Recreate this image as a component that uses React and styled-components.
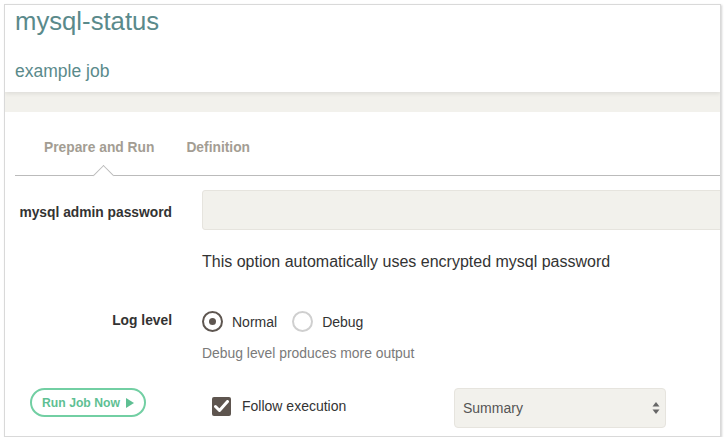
import React from "react";
import styled, { createGlobalStyle } from "styled-components";

const Global = createGlobalStyle`
  html, body { margin: 0; padding: 0; background: #fff; }
  body { font-family: "Liberation Sans", Arial, Helvetica, sans-serif; color: #333; }
  * { box-sizing: border-box; }
`;

const Page = styled.div`
  padding: 4px 0 0 4px;
`;

const Frame = styled.div`
  width: 717px;
  height: 433px;
  border: 1px solid #d9d9d9;
  box-shadow: 1px 1px 2px rgba(0, 0, 0, 0.18);
  overflow: hidden;
  background: #fff;
`;

const Header = styled.header`
  height: 87px;
  padding: 1px 0 0 10px;
  background: #fff;
  position: relative;
  z-index: 1;
  box-shadow: 0 2px 4px rgba(0, 0, 0, 0.08);
`;

const Title = styled.h1`
  margin: 0;
  font-weight: normal;
  font-size: 25.7px;
  line-height: 30px;
  color: #5a8a8b;
`;

const Subtitle = styled.div`
  margin-top: 25px;
  font-size: 17.5px;
  line-height: 20px;
  color: #5a8a8b;
`;

const Band = styled.div`
  height: 20px;
  background: #f2f1ec;
`;

const Content = styled.main`
  padding-left: 10px;
`;

const TabBar = styled.nav`
  display: flex;
  padding: 26px 0 17px 13px;
  border-bottom: 1px solid #bbbbbb;
`;

const Tab = styled.div`
  position: relative;
  padding: 0 16px;
  font-size: 13.8px;
  line-height: 20px;
  font-weight: bold;
  color: #a39d93;
  ${(p) =>
    p.$active &&
    `
    &::after {
      content: "";
      position: absolute;
      left: 68px;
      bottom: -25px;
      width: 14px;
      height: 14px;
      background: #fff;
      border-top: 1px solid #bbbbbb;
      border-left: 1px solid #bbbbbb;
      transform: rotate(45deg);
    }
  `}
`;

const FormRow = styled.div`
  display: grid;
  grid-template-columns: 157px 1fr;
  column-gap: 30px;
  margin-top: ${(p) => p.$mt || 0}px;
`;

const Label = styled.label`
  text-align: right;
  font-size: 13.8px;
  line-height: 20px;
  font-weight: bold;
  color: #333;
  white-space: nowrap;
  margin-top: ${(p) => p.$mt || 0}px;
`;

const Field = styled.div`
  min-width: 0;
`;

const TextInput = styled.input`
  display: block;
  width: 560px;
  height: 40px;
  border: 1px solid #e6e4de;
  border-radius: 3px;
  background: #f2f1ec;
  outline: none;
`;

const HelpLarge = styled.p`
  margin: 22px 0 0;
  font-size: 16px;
  line-height: 20px;
  color: #333;
`;

const RadioGroup = styled.div`
  display: flex;
  align-items: center;
  height: 21px;
`;

const RadioItem = styled.label`
  display: flex;
  align-items: center;
  margin-right: 15px;
  font-size: 14px;
  line-height: 20px;
  color: #333;
`;

const RadioCircle = styled.span`
  width: 21px;
  height: 21px;
  border-radius: 50%;
  border: 2px solid ${(p) => (p.$checked ? "#5e5650" : "#cfcfcf")};
  margin-right: 9px;
  display: flex;
  align-items: center;
  justify-content: center;
  &::after {
    content: "";
    width: 7px;
    height: 7px;
    border-radius: 50%;
    background: ${(p) => (p.$checked ? "#5e5650" : "transparent")};
  }
`;

const HelpSmall = styled.p`
  margin: 12px 0 0;
  font-size: 13.9px;
  line-height: 18px;
  color: #7a7a7a;
`;

const ActionCell = styled.div`
  padding-left: 15px;
`;

const RunButton = styled.button`
  display: flex;
  align-items: center;
  justify-content: center;
  gap: 6px;
  width: 116px;
  height: 29px;
  padding: 0;
  border: 2px solid #72cfa3;
  border-radius: 15px;
  background: #fff;
  color: #5ebf93;
  font-family: "Liberation Sans", Arial, sans-serif;
  font-size: 12.2px;
  font-weight: bold;
`;

const Options = styled.div`
  display: flex;
  align-items: flex-start;
`;

const FollowCheck = styled.label`
  display: flex;
  align-items: center;
  width: 252px;
  margin-top: 8px;
  padding-left: 10px;
  font-size: 14px;
  line-height: 20px;
  color: #333;
`;

const CheckBox = styled.span`
  width: 19px;
  height: 19px;
  border-radius: 2px;
  background: #5e554f;
  margin-right: 11px;
  display: flex;
  align-items: center;
  justify-content: center;
`;

const Select = styled.div`
  display: flex;
  align-items: center;
  justify-content: space-between;
  width: 212px;
  height: 40px;
  padding: 0 5px 0 8px;
  border: 1px solid #e6e4de;
  border-radius: 4px;
  background: #f2f1ec;
  font-size: 14px;
  color: #555;
`;

export default function App() {
  return (
    <>
      <Global />
      <Page>
        <Frame>
          <Header>
            <Title>mysql-status</Title>
            <Subtitle>example job</Subtitle>
          </Header>
          <Band />
          <Content>
            <TabBar>
              <Tab $active>Prepare and Run</Tab>
              <Tab>Definition</Tab>
            </TabBar>

            <FormRow $mt={14}>
              <Label $mt={13}>mysql admin password</Label>
              <Field>
                <TextInput type="password" />
                <HelpLarge>This option automatically uses encrypted mysql password</HelpLarge>
              </Field>
            </FormRow>

            <FormRow $mt={39}>
              <Label>Log level</Label>
              <Field>
                <RadioGroup>
                  <RadioItem>
                    <RadioCircle $checked />
                    Normal
                  </RadioItem>
                  <RadioItem>
                    <RadioCircle />
                    Debug
                  </RadioItem>
                </RadioGroup>
                <HelpSmall>Debug level produces more output</HelpSmall>
              </Field>
            </FormRow>

            <FormRow $mt={26}>
              <ActionCell>
                <RunButton>
                  Run Job Now
                  <svg width="8" height="10" viewBox="0 0 8 10">
                    <path d="M0 0 L8 5 L0 10 Z" fill="#5ebf93" />
                  </svg>
                </RunButton>
              </ActionCell>
              <Options>
                <FollowCheck>
                  <CheckBox>
                    <svg width="15" height="13" viewBox="0 0 15 13">
                      <path d="M1.5 6.5 L5.5 10.5 L13.5 1.5" fill="none" stroke="#fff" strokeWidth="3" strokeLinecap="round" strokeLinejoin="round" />
                    </svg>
                  </CheckBox>
                  Follow execution
                </FollowCheck>
                <Select>
                  <span>Summary</span>
                  <svg width="8" height="14" viewBox="0 0 8 14">
                    <path d="M4 1 L7.5 5.5 L0.5 5.5 Z" fill="#666" />
                    <path d="M4 13 L7.5 8.5 L0.5 8.5 Z" fill="#666" />
                  </svg>
                </Select>
              </Options>
            </FormRow>
          </Content>
        </Frame>
      </Page>
    </>
  );
}
